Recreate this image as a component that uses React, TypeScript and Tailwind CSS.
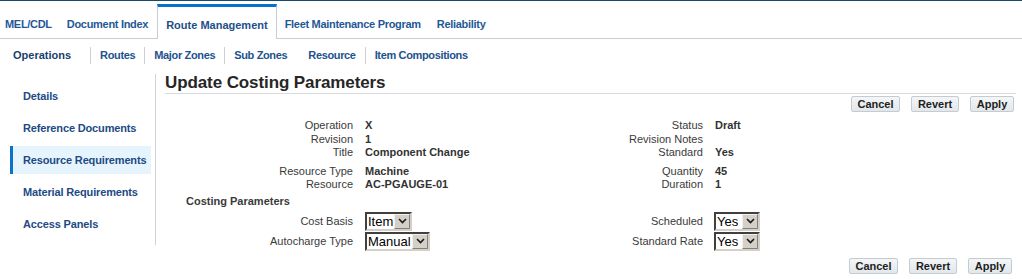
import React from "react";

const font = { fontFamily: '"Liberation Sans", Arial, sans-serif' };

function Select({ value, width }: { value: string; width: string }) {
  return (
    <div
      className={`flex h-[19px] items-stretch border-2 border-t-[#404040] border-l-[#404040] border-r-[#d4d0c8] border-b-[#d4d0c8] bg-white ${width}`}
    >
      <div className="flex flex-1 items-center pl-[1px] text-[13px] leading-[15px] text-black">{value}</div>
      <div className="flex w-[16px] items-center justify-center border border-t-[#f0f0f0] border-l-[#f0f0f0] border-r-[#808080] border-b-[#808080] bg-[#d4d0c8]">
        <svg width="9" height="6" viewBox="0 0 9 6">
          <path d="M1 1 L4.5 4.5 L8 1" fill="none" stroke="#1a1a1a" strokeWidth="1.6" />
        </svg>
      </div>
    </div>
  );
}

function Btn({ label, w }: { label: string; w: string }) {
  return (
    <div
      className={`flex h-[16px] items-center justify-center rounded-[2px] border border-[#c4cbd1] bg-gradient-to-b from-[#f4f6f7] to-[#e2e7eb] text-[11px] font-bold text-[#1e1e1e] ${w}`}
    >
      {label}
    </div>
  );
}

function Buttons({ pr }: { pr: string }) {
  return (
    <div className={`flex justify-end gap-[11px] ${pr}`}>
      <Btn label="Cancel" w="w-[49px]" />
      <Btn label="Revert" w="w-[48px]" />
      <Btn label="Apply" w="w-[44px]" />
    </div>
  );
}

function Row({
  l1,
  v1,
  l2,
  v2,
  h,
  mt = "",
}: {
  l1: string;
  v1: string;
  l2: string;
  v2: string;
  h: string;
  mt?: string;
}) {
  return (
    <div className={`flex items-center text-[11px] ${h} ${mt}`}>
      <div className="w-[188px] text-right text-[#3a3a3a]">{l1}</div>
      <div className="ml-[12px] w-[188px] font-bold text-[#333]">{v1}</div>
      <div className="w-[150px] text-right text-[#3a3a3a]">{l2}</div>
      <div className="ml-[12px] font-bold text-[#333]">{v2}</div>
    </div>
  );
}

export default function App() {
  const navItems = [
    "Details",
    "Reference Documents",
    "Resource Requirements",
    "Material Requirements",
    "Access Panels",
  ];
  return (
    <div className="h-[279px] w-[1022px] overflow-hidden bg-white" style={font}>
      <div className="h-px bg-[#1a4a68]" />
      {/* Tabs */}
      <div className="flex h-[38px] border-b border-[#c7ced4] text-[11px] font-bold tracking-[-0.3px] text-[#1f5896]">
        <div className="flex h-full items-center pt-[10px] pl-[5px] pr-[8px]">MEL/CDL</div>
        <div className="flex h-full items-center pt-[10px] pl-[7px] pr-[9px]">Document Index</div>
        <div className="mt-[3px] flex h-[35px] items-center border-x border-t-[3px] border-x-[#c7ced4] border-t-[#0a70c9] bg-white px-[8px] pt-[5px] tracking-normal text-[#1c4f88]">
          Route Management
        </div>
        <div className="flex h-full items-center pt-[10px] px-[8px]">Fleet Maintenance Program</div>
        <div className="flex h-full items-center pt-[10px] px-[8px]">Reliability</div>
      </div>
      {/* Sub tabs */}
      <div className="flex h-[32px] items-center text-[11px] font-bold text-[#22528e]">
        <div className="pl-[13px] pr-[19px] text-[#173f70]">Operations</div>
        <div className="h-[17px] w-px bg-[#cfcfcf]" />
        <div className="flex items-center tracking-[-0.35px]">
          <div className="px-[9px]">Routes</div>
          <div className="h-[17px] w-px bg-[#cfcfcf]" />
          <div className="px-[9px]">Major Zones</div>
          <div className="h-[17px] w-px bg-[#cfcfcf]" />
          <div className="px-[9px]">Sub Zones</div>
          <div className="h-[17px] w-px bg-transparent" />
          <div className="pl-[11px] pr-[9px]">Resource</div>
          <div className="h-[17px] w-px bg-[#cfcfcf]" />
          <div className="px-[9px]">Item Compositions</div>
        </div>
      </div>
      {/* Main */}
      <div className="flex">
        <div className="mt-[3px] h-[171px] w-[156px] shrink-0 border-r border-[#cdd3d8] pt-[8px]">
          <div className="flex flex-col gap-[4px]">
            {navItems.map((n) => (
              <div
                key={n}
                className={`ml-[10px] flex h-[28px] w-[141px] items-center border-l-[3px] pl-[10px] text-[11px] font-bold tracking-[-0.15px] text-[#1d4a85] ${
                  n === "Resource Requirements"
                    ? "border-[#0b72c7] bg-[#e6f5fd]"
                    : "border-transparent"
                }`}
              >
                {n}
              </div>
            ))}
          </div>
        </div>
        <div className="flex-1 pl-[9px]">
          <div className="mr-[6px] border-b border-[#d5dbe0] pt-[2px] text-[17px] font-bold leading-[20px] tracking-[-0.1px] text-[#262626]">
            Update Costing Parameters
          </div>
          <div className="mt-[2px]">
            <Buttons pr="pr-[8px]" />
          </div>
          <div className="mt-[7px]">
            <Row l1="Operation" v1="X" l2="Status" v2="Draft" h="h-[13px]" />
            <Row l1="Revision" v1="1" l2="Revision Notes" v2="" h="h-[14px]" />
            <Row l1="Title" v1="Component Change" l2="Standard" v2="Yes" h="h-[13px]" />
            <Row l1="Resource Type" v1="Machine" l2="Quantity" v2="45" h="h-[14px]" mt="mt-[5px]" />
            <Row l1="Resource" v1="AC-PGAUGE-01" l2="Duration" v2="1" h="h-[13px]" />
          </div>
          <div className="mt-[4px] h-[13px] pl-[21px] text-[11px] font-bold leading-[13px] text-[#3a3a3a]">
            Costing Parameters
          </div>
          <div className="mt-[3px]">
            <div className="flex h-[20px] items-center text-[11px]">
              <div className="w-[188px] text-right text-[#3a3a3a]">Cost Basis</div>
              <div className="ml-[12px] w-[188px]">
                <Select value="Item" width="w-[47px]" />
              </div>
              <div className="w-[150px] text-right text-[#3a3a3a]">Scheduled</div>
              <div className="ml-[11px]">
                <Select value="Yes" width="w-[46px]" />
              </div>
            </div>
            <div className="flex h-[20px] items-center text-[11px]">
              <div className="w-[188px] text-right text-[#3a3a3a]">Autocharge Type</div>
              <div className="ml-[12px] w-[188px]">
                <Select value="Manual" width="w-[65px]" />
              </div>
              <div className="w-[150px] text-right text-[#3a3a3a]">Standard Rate</div>
              <div className="ml-[11px]">
                <Select value="Yes" width="w-[46px]" />
              </div>
            </div>
          </div>
          <div className="mt-[7px]">
            <Buttons pr="pr-[10px]" />
          </div>
        </div>
      </div>
    </div>
  );
}
